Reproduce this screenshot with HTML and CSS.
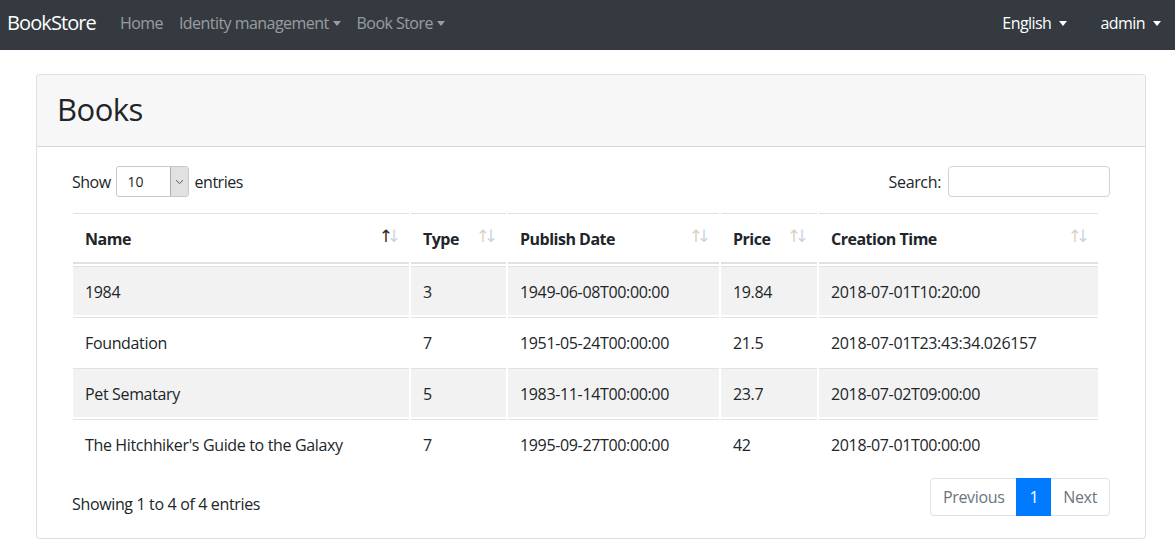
FILE: index.html
```html
<!DOCTYPE html>
<html lang="en">
<head>
<meta charset="utf-8">
<title>Books - BookStore</title>
<link rel="stylesheet" href="styles.css">
</head>
<body>
<nav class="navbar">
  <a class="brand" href="#">BookStore</a>
  <ul class="nav nav-left">
    <li><a class="nav-link" href="#">Home</a></li>
    <li><a class="nav-link dropdown" href="#">Identity management</a></li>
    <li><a class="nav-link dropdown" href="#">Book Store</a></li>
  </ul>
  <ul class="nav nav-right">
    <li><a class="nav-link light dropdown" href="#">English</a></li>
    <li><a class="nav-link light dropdown" href="#">admin</a></li>
  </ul>
</nav>

<main class="card">
  <div class="card-header">
    <h1 class="card-title">Books</h1>
  </div>
  <div class="card-body">
    <div class="dt-top">
      <label class="dt-length">Show
        <span class="select"><span class="select-value">10</span><span class="select-arrow"><svg width="9" height="6" viewBox="0 0 9 6"><path d="M1 1.2 L4.5 4.6 L8 1.2" fill="none" stroke="#555" stroke-width="1"/></svg></span></span>
        entries</label>
      <label class="dt-search">Search: <span class="input"></span></label>
    </div>

    <table class="table">
      <thead>
        <tr>
          <th class="c-name sorting asc">Name</th>
          <th class="c-type sorting">Type</th>
          <th class="c-date sorting">Publish Date</th>
          <th class="c-price sorting">Price</th>
          <th class="c-time sorting">Creation Time</th>
        </tr>
      </thead>
      <tbody>
        <tr class="odd"><td>1984</td><td>3</td><td>1949-06-08T00:00:00</td><td>19.84</td><td>2018-07-01T10:20:00</td></tr>
        <tr><td>Foundation</td><td>7</td><td>1951-05-24T00:00:00</td><td>21.5</td><td>2018-07-01T23:43:34.026157</td></tr>
        <tr class="odd"><td>Pet Sematary</td><td>5</td><td>1983-11-14T00:00:00</td><td>23.7</td><td>2018-07-02T09:00:00</td></tr>
        <tr><td>The Hitchhiker's Guide to the Galaxy</td><td>7</td><td>1995-09-27T00:00:00</td><td>42</td><td>2018-07-01T00:00:00</td></tr>
      </tbody>
    </table>

    <div class="dt-bottom">
      <div class="dt-info">Showing 1 to 4 of 4 entries</div>
      <ul class="pagination">
        <li class="page-item disabled"><span class="page-link first">Previous</span></li>
        <li class="page-item active"><span class="page-link">1</span></li>
        <li class="page-item disabled"><span class="page-link last">Next</span></li>
      </ul>
    </div>
  </div>
</main>
</body>
</html>
```
FILE: styles.css
```css
* { box-sizing: border-box; }

html, body {
  margin: 0;
  padding: 0;
}

body {
  font-family: "Open Sans", "Noto Sans", "Liberation Sans", sans-serif;
  font-size: 16px;
  line-height: 1.5;
  color: #212529;
  background: #fff;
  letter-spacing: -0.35px;
}

/* Navbar */
.navbar {
  height: 50px;
  background: #343a40;
  display: flex;
  align-items: center;
  padding: 0 6px 4px 7px;
}

.brand {
  color: #fff;
  font-size: 20px;
  text-decoration: none;
  margin-right: 16px;
  letter-spacing: -0.9px;
}

.nav {
  list-style: none;
  margin: 0;
  padding: 0;
  display: flex;
}

.nav-right {
  margin-left: auto;
  gap: 17px;
}

.nav-link {
  display: block;
  padding: 8px;
  color: rgba(255, 255, 255, 0.5);
  text-decoration: none;
  letter-spacing: -0.55px;
}

.nav-link.light { color: #fff; }

.dropdown::after {
  content: "";
  display: inline-block;
  margin-left: 4px;
  vertical-align: 3px;
  border-top: 5px solid;
  border-left: 4px solid transparent;
  border-right: 4px solid transparent;
}

.nav-link.light.dropdown::after { margin-left: 8px; }

/* Card */
.card {
  margin: 24px 0 0 36px;
  width: 1110px;
  border: 1px solid rgba(0, 0, 0, 0.125);
  border-radius: 4px;
  background: #fff;
}

.card-header {
  background: #f7f7f7;
  border-bottom: 1px solid rgba(0, 0, 0, 0.125);
  padding: 10px 20px 13px;
  border-radius: 3px 3px 0 0;
}

.card-title {
  margin: 0;
  font-size: 31px;
  font-weight: 400;
  line-height: 48px;
  letter-spacing: -0.5px;
}

.card-body {
  padding: 19px 35px 22px 35px;
}

/* DataTables top */
.dt-top {
  display: flex;
  justify-content: space-between;
  align-items: center;
  height: 31px;
}

.dt-length, .dt-search {
  display: flex;
  align-items: center;
}

.dt-length { letter-spacing: -0.5px; }

.select {
  display: inline-flex;
  width: 73px;
  height: 31px;
  margin: 0 6px 0 5px;
  border: 1px solid #c9c9c9;
  border-radius: 3px;
  background: #fff;
  font-size: 14px;
  overflow: hidden;
  letter-spacing: 0;
}

.select-value {
  flex: 1;
  padding-left: 11px;
  line-height: 29px;
}

.select-arrow {
  width: 18px;
  background: #e1e1e1;
  border-left: 1px solid #adadad;
  display: flex;
  align-items: center;
  justify-content: center;
}

.input {
  display: inline-block;
  width: 162px;
  height: 31px;
  margin-left: 7px;
  border: 1px solid #ced4da;
  border-radius: 4px;
}

/* Table */
.table {
  width: 1029px;
  margin: 14px 0 0 -1px;
  border-collapse: separate;
  border-spacing: 2px;
  table-layout: fixed;
}

.table th, .table td {
  padding: 13px 12px 11px;
  border-top: 1px solid #dee2e6;
  text-align: left;
  vertical-align: top;
}

.table th {
  font-weight: 700;
  border-bottom: 2px solid #dee2e6;
  padding-right: 30px;
  position: relative;
  letter-spacing: -0.5px;
}

.c-name { width: 336px; }
.c-type { width: 95px; }
.c-date { width: 211px; }
.c-price { width: 96px; }
.c-time { width: 279px; }

.sorting::before, .sorting::after {
  position: absolute;
  bottom: 17px;
  font-weight: 400;
  font-family: "DejaVu Sans", sans-serif;
  font-size: 17px;
  line-height: 1;
  opacity: 0.3;
  color: #4a6fa5;
  letter-spacing: 0;
}

.sorting::before {
  content: "\2191";
  right: 16px;
  color: #8a6a3a;
}

.sorting::after {
  content: "\2193";
  right: 8px;
}

.sorting.asc::before {
  opacity: 1;
  color: #3a2a1a;
}

.table tr.odd td {
  background: #f2f2f2;
}

/* Bottom */
.dt-bottom {
  display: flex;
  justify-content: space-between;
  align-items: flex-start;
  margin-top: 6px;
}

.dt-info {
  padding-top: 16px;
}

.pagination {
  list-style: none;
  margin: 2px 0 0;
  padding: 0;
  display: flex;
}

.page-link {
  display: block;
  padding: 8px 12px;
  line-height: 20px;
  border: 1px solid #dee2e6;
  margin-left: -1px;
  color: #6c757d;
  background: #fff;
}

.page-link.first {
  margin-left: 0;
  border-radius: 4px 0 0 4px;
}

.page-link.last {
  border-radius: 0 4px 4px 0;
}

.page-item.active .page-link {
  background: #007bff;
  border-color: #007bff;
  color: #fff;
  position: relative;
}
```
